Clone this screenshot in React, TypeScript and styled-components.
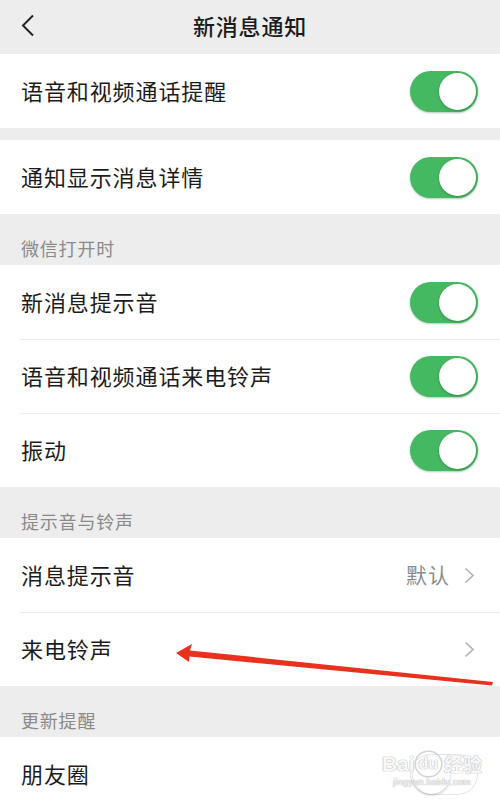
import React from "react";
import styled, { createGlobalStyle } from "styled-components";

const Global = createGlobalStyle`
  html, body { margin: 0; padding: 0; background: #ededed; }
  body { font-family: "Noto Sans CJK SC", "Noto Sans", sans-serif; }
  #root { width: 500px; height: 799px; overflow: hidden; }
`;

const Page = styled.div`
  position: relative;
  width: 500px;
  height: 799px;
  overflow: hidden;
  background: #ededed;
`;

const Header = styled.div`
  height: 54px;
  display: flex;
  align-items: center;
  justify-content: center;
  position: relative;
  background: #ededed;
`;

const BackBtn = styled.div`
  position: absolute;
  left: 21px;
  top: 14px;
  width: 14px;
  height: 23px;
  display: flex;
`;

const Title = styled.div`
  font-size: 22px;
  line-height: 26px;
  font-weight: 500;
  color: #1b1b1b;
  letter-spacing: 0.8px;
  margin-bottom: 4px;
`;

const Gap = styled.div`
  height: 12px;
`;

const SectionLabel = styled.div`
  height: 51px;
  box-sizing: border-box;
  display: flex;
  align-items: flex-end;
  padding: 0 0 7px 21px;
  font-size: 18px;
  line-height: 20px;
  letter-spacing: 0.8px;
  color: #8a8a8a;
`;

const Row = styled.div<{ $divider?: boolean }>`
  position: relative;
  height: 74px;
  box-sizing: border-box;
  background: #fff;
  display: flex;
  align-items: center;
  padding: 0 22px 0 21px;
  &::before {
    content: "";
    display: ${(p) => (p.$divider ? "block" : "none")};
    position: absolute;
    top: 0;
    left: 20px;
    right: 0;
    height: 1px;
    background: #ececec;
  }
`;

const Label = styled.div`
  flex: 1;
  font-size: 22px;
  line-height: 26px;
  color: #1c1c1c;
  letter-spacing: 0.9px;
  margin-bottom: 3px;
`;

const Value = styled.div`
  font-size: 21px;
  line-height: 26px;
  color: #8c8c8c;
  letter-spacing: 1px;
  margin-right: 14px;
  margin-bottom: 3px;
`;

const Chevron = styled.div`
  width: 11px;
  height: 17px;
  display: flex;
  margin-right: 3px;
`;

const Toggle = styled.div<{ $on: boolean }>`
  width: 68px;
  height: 41px;
  box-sizing: border-box;
  border-radius: 21px;
  padding: 2px;
  display: flex;
  justify-content: ${(p) => (p.$on ? "flex-end" : "flex-start")};
  background: ${(p) => (p.$on ? "#45b962" : "#fff")};
  border: ${(p) => (p.$on ? "none" : "1.5px solid #e4e4e4")};
  box-shadow: ${(p) => (p.$on ? "0 1px 2px rgba(40,110,60,0.35)" : "none")};
`;

const Knob = styled.div`
  width: 37px;
  height: 37px;
  border-radius: 50%;
  background: #fff;
  box-shadow: 0 1px 3px rgba(0, 0, 0, 0.25);
`;

const ArrowSvg = styled.svg`
  position: absolute;
  left: 0;
  top: 0;
  pointer-events: none;
`;

const Watermark = styled.div`
  position: absolute;
  left: 380px;
  top: 752px;
  width: 104px;
  display: flex;
  flex-direction: column;
  align-items: center;
  color: rgba(255, 255, 255, 0.92);
  text-shadow: 0 0 1px #bdbdbd, 0 0 1px #bdbdbd, 0 0 1px #bdbdbd;
  font-family: "Liberation Sans", sans-serif;
`;

const WmMain = styled.div`
  font-size: 21px;
  font-weight: 700;
  line-height: 24px;
  display: flex;
  align-items: center;
  gap: 1px;
`;

const WmDu = styled.span`
  font-size: 16px;
  border-radius: 12px;
  padding: 0 3px;
  box-shadow: 0 0 0 1.5px rgba(200, 200, 200, 0.8);
`;

const WmCn = styled.span`
  font-family: "Noto Sans CJK SC", sans-serif;
  font-size: 19px;
  margin-left: 2px;
`;

const WmSub = styled.div`
  font-size: 9px;
  line-height: 12px;
  letter-spacing: 0.3px;
`;

const ChevronIcon = () => (
  <svg width="11" height="17" viewBox="0 0 11 17">
    <path d="M1.5 1.5 L9 8.5 L1.5 15.5" fill="none" stroke="#b3b3b3" strokeWidth="1.7" />
  </svg>
);

const Switch = ({ on }: { on: boolean }) => (
  <Toggle $on={on}>
    <Knob />
  </Toggle>
);

export default function App() {
  return (
    <Page>
      <Global />
      <Header>
        <BackBtn>
          <svg width="14" height="23" viewBox="0 0 14 23">
            <path d="M12 1.5 L2 11.5 L12 21.5" fill="none" stroke="#222" strokeWidth="2" />
          </svg>
        </BackBtn>
        <Title>新消息通知</Title>
      </Header>
      <Row>
        <Label>语音和视频通话提醒</Label>
        <Switch on />
      </Row>
      <Gap />
      <Row>
        <Label>通知显示消息详情</Label>
        <Switch on />
      </Row>
      <SectionLabel>微信打开时</SectionLabel>
      <Row>
        <Label>新消息提示音</Label>
        <Switch on />
      </Row>
      <Row $divider>
        <Label>语音和视频通话来电铃声</Label>
        <Switch on />
      </Row>
      <Row $divider>
        <Label>振动</Label>
        <Switch on />
      </Row>
      <SectionLabel>提示音与铃声</SectionLabel>
      <Row>
        <Label>消息提示音</Label>
        <Value>默认</Value>
        <Chevron>
          <ChevronIcon />
        </Chevron>
      </Row>
      <Row $divider>
        <Label>来电铃声</Label>
        <Chevron>
          <ChevronIcon />
        </Chevron>
      </Row>
      <SectionLabel>更新提醒</SectionLabel>
      <Row>
        <Label>朋友圈</Label>
        <Switch on={false} />
      </Row>
      <ArrowSvg width="500" height="799" viewBox="0 0 500 799">
        <polygon
          points="176,653 192,644 190,650.5 493,682 492,685.5 189.5,656.5 189,662"
          fill="#e8321f"
        />
      </ArrowSvg>
      <Watermark>
        <WmMain>
          <span>Bai</span>
          <WmDu>du</WmDu>
          <WmCn>经验</WmCn>
        </WmMain>
        <WmSub>jingyan.baidu.com</WmSub>
      </Watermark>
    </Page>
  );
}
